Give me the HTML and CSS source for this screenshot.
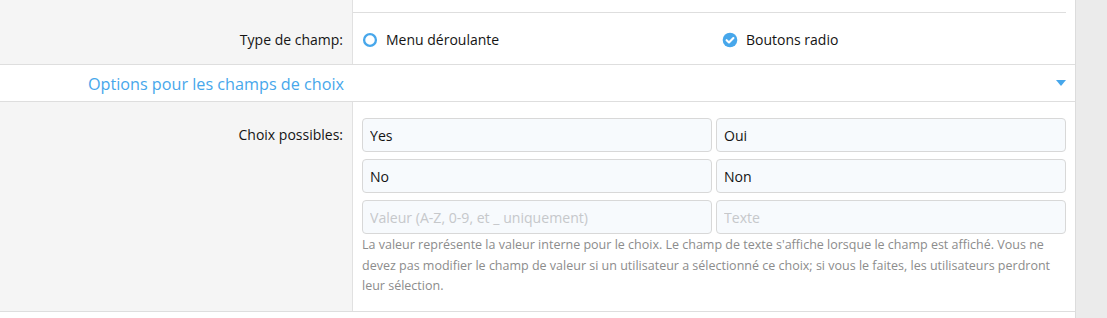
FILE: index.html
```html
<!DOCTYPE html>
<html lang="fr">
<head>
<meta charset="utf-8">
<title>Options</title>
<link rel="stylesheet" href="styles.css">
</head>
<body>
<div class="page">
  <div class="block">
    <div class="row row-top">
      <div class="label-col"></div>
      <div class="control-col"><div class="top-line"></div></div>
    </div>

    <div class="row row-type">
      <div class="label-col"><span class="label">Type de champ:</span></div>
      <div class="control-col">
        <ul class="radio-list">
          <li class="radio">
            <svg class="radio-icon" viewBox="0 0 16 16" width="16" height="16" aria-hidden="true">
              <circle cx="8" cy="8" r="5.9" fill="none" stroke="#47a7eb" stroke-width="2.3"/>
            </svg>
            <span>Menu déroulante</span>
          </li>
          <li class="radio">
            <svg class="radio-icon" viewBox="0 0 16 16" width="16" height="16" aria-hidden="true">
              <circle cx="8" cy="8" r="7.3" fill="#47a7eb"/>
              <path d="M4.6 8.2 L7 10.5 L11.4 6" fill="none" stroke="#fff" stroke-width="2.1" stroke-linecap="round" stroke-linejoin="round"/>
            </svg>
            <span>Boutons radio</span>
          </li>
        </ul>
      </div>
    </div>

    <div class="collapse-header">
      <div class="header-title">Options pour les champs de choix</div>
      <div class="header-tail"><span class="arrow"></span></div>
    </div>

    <div class="row row-choices">
      <div class="label-col"><span class="label">Choix possibles:</span></div>
      <div class="control-col">
        <div class="choice-grid">
          <input class="input" type="text" value="Yes">
          <input class="input" type="text" value="Oui">
          <input class="input" type="text" value="No">
          <input class="input" type="text" value="Non">
          <input class="input" type="text" placeholder="Valeur (A-Z, 0-9, et _ uniquement)">
          <input class="input" type="text" placeholder="Texte">
        </div>
        <p class="explain">La valeur représente la valeur interne pour le choix. Le champ de texte s'affiche lorsque le champ est affiché. Vous ne devez pas modifier le champ de valeur si un utilisateur a sélectionné ce choix; si vous le faites, les utilisateurs perdront leur sélection.</p>
      </div>
    </div>

    <div class="row-bottom"></div>
  </div>
  <div class="side"></div>
</div>
</body>
</html>
```

FILE: styles.css
```css
* { box-sizing: border-box; }

html, body {
  margin: 0;
  padding: 0;
  height: 100%;
}

body {
  font-family: "Open Sans", "Noto Sans", sans-serif;
  font-size: 14px;
  color: #141414;
  background: #ebebeb;
}

.page {
  display: flex;
  min-height: 318px;
}

.block {
  width: 1076px;
  background: #fff;
  border-right: 1px solid #dcdcdc;
  display: flex;
  flex-direction: column;
}

.side {
  flex: 1;
  background: #ebebeb;
}

.row {
  display: grid;
  grid-template-columns: 353px 1fr;
  border-bottom: 1px solid #dedede;
}

.label-col {
  background: #f5f5f5;
  border-right: 1px solid #e1e1e1;
  text-align: right;
  padding-right: 9px;
}

.control-col {
  padding: 0 9px;
}

.label {
  line-height: 21px;
}

/* top (cut) row */
.row-top {
  border-bottom: none;
}
.row-top .label-col {
  height: 13px;
}
.row-top .control-col {
  padding-left: 0;
  padding-right: 9px;
}
.top-line {
  height: 13px;
  border-bottom: 1px solid #dedede;
}

/* type row */
.row-type .label-col,
.row-type .control-col {
  padding-top: 16px;
  padding-bottom: 14px;
}

.radio-list {
  list-style: none;
  margin: 0;
  padding: 0;
  display: grid;
  grid-template-columns: 360px 1fr;
}

.radio {
  display: flex;
  align-items: center;
  gap: 8px;
  line-height: 21px;
}

.radio-icon {
  display: block;
  flex: none;
}

/* collapsible header */
.collapse-header {
  display: grid;
  grid-template-columns: 353px 1fr;
  height: 37px;
  border-bottom: 1px solid #dedede;
  align-items: center;
}

.header-title {
  text-align: right;
  padding-right: 9px;
  font-size: 16.2px;
  color: #47a7eb;
  line-height: 22px;
  margin-top: 1px;
}

.header-tail {
  display: flex;
  justify-content: flex-end;
  padding-right: 9px;
}

.arrow {
  width: 0;
  height: 0;
  border-left: 5px solid transparent;
  border-right: 5px solid transparent;
  border-top: 6px solid #47a7eb;
  margin-top: -1px;
}

/* choices row */
.row-choices .label-col {
  padding-top: 22px;
}
.row-choices .control-col {
  padding-top: 16px;
  padding-bottom: 14px;
}

.choice-grid {
  display: grid;
  grid-template-columns: 1fr 1fr;
  column-gap: 4px;
  row-gap: 7px;
}

.input {
  font-family: inherit;
  font-size: 14.1px;
  color: #141414;
  height: 34px;
  padding: 0 7px;
  background: #f7fafd;
  border: 1px solid #d8d8d8;
  border-radius: 4px;
  width: 100%;
  outline: none;
}

.input::placeholder {
  color: #c6c8cb;
}

.explain {
  margin: 1px 0 0;
  font-size: 12.5px;
  line-height: 20.5px;
  color: #8c8c8c;
}

.row-bottom {
  flex: 1;
  background: #fff;
}
```
